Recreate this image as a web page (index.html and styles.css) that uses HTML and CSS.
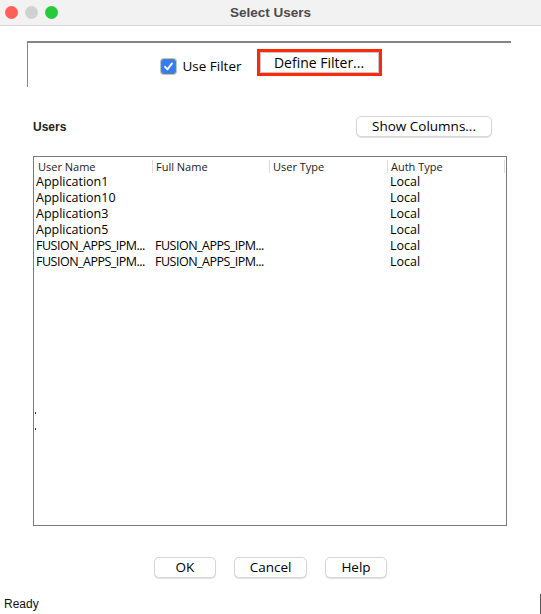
FILE: index.html
```html
<!DOCTYPE html>
<html>
<head>
<meta charset="utf-8">
<link rel="stylesheet" href="styles.css">
</head>
<body>
<div class="window">
  <div class="titlebar">
    <div class="lights">
      <span class="light red"></span>
      <span class="light gray"></span>
      <span class="light green"></span>
    </div>
    <div class="title">Select Users</div>
  </div>
  <div class="content">
    <div class="filter-panel">
      <label class="check">
        <span class="box"><svg width="11" height="11" viewBox="0 0 11 11"><path d="M2 5.8 L4.4 8.4 L9 2.4" fill="none" stroke="#fff" stroke-width="1.9" stroke-linecap="round" stroke-linejoin="round"/></svg></span>
        <span>Use Filter</span>
      </label>
      <div class="highlight"><button class="btn define">Define Filter...</button></div>
    </div>
    <div class="users-row">
      <span class="users-label">Users</span>
      <button class="btn rounded showcols">Show Columns...</button>
    </div>
    <div class="table">
      <div class="row head">
        <div class="c c1">User Name</div>
        <div class="c c2">Full Name</div>
        <div class="c c3">User Type</div>
        <div class="c c4">Auth Type</div>
      </div>
      <div class="row"><div class="c c1">Application1</div><div class="c c2"></div><div class="c c3"></div><div class="c c4">Local</div></div>
      <div class="row"><div class="c c1">Application10</div><div class="c c2"></div><div class="c c3"></div><div class="c c4">Local</div></div>
      <div class="row"><div class="c c1">Application3</div><div class="c c2"></div><div class="c c3"></div><div class="c c4">Local</div></div>
      <div class="row"><div class="c c1">Application5</div><div class="c c2"></div><div class="c c3"></div><div class="c c4">Local</div></div>
      <div class="row"><div class="c c1 caps">FUSION_APPS_IPM...</div><div class="c c2 caps">FUSION_APPS_IPM...</div><div class="c c3"></div><div class="c c4">Local</div></div>
      <div class="row"><div class="c c1 caps">FUSION_APPS_IPM...</div><div class="c c2 caps">FUSION_APPS_IPM...</div><div class="c c3"></div><div class="c c4">Local</div></div>
      <span class="dot d1"></span>
      <span class="dot d2"></span>
    </div>
    <div class="buttons">
      <button class="btn rounded ok">OK</button>
      <button class="btn rounded cancel">Cancel</button>
      <button class="btn rounded help">Help</button>
    </div>
  </div>
  <div class="status">Ready</div>
</div>
</body>
</html>
```
FILE: styles.css
```css
html, body {
  margin: 0;
  padding: 0;
  background: #ffffff;
}
body {
  width: 541px;
  height: 614px;
  overflow: hidden;
  font-family: "Open Sans", "DejaVu Sans", sans-serif;
  font-size: 12px;
  color: #000;
}
.window {
  width: 541px;
  height: 614px;
  display: flex;
  flex-direction: column;
}
.titlebar {
  height: 25px;
  flex: none;
  background: #f2f2f2;
  border-bottom: 1px solid #d8d8d8;
  position: relative;
  display: flex;
  align-items: center;
  justify-content: center;
}
.lights {
  position: absolute;
  left: 5px;
  top: 6px;
  display: flex;
  gap: 7px;
}
.light {
  width: 13px;
  height: 13px;
  border-radius: 50%;
  display: block;
}
.light.red { background: #fe5f57; }
.light.gray { background: #d1d1d1; }
.light.green { background: #27c93f; }
.title {
  font-family: "Liberation Sans", "Open Sans", sans-serif;
  font-weight: bold;
  font-size: 13.5px;
  color: #4b4b4b;
}
.content {
  flex: 1;
  display: flex;
  flex-direction: column;
}
.filter-panel {
  margin: 15px 30px 0 27px;
  height: 46px;
  border-top: 2px solid #858585;
  border-left: 1px solid #858585;
  display: flex;
  justify-content: center;
  align-items: flex-start;
  padding-top: 6px;
  padding-left: 4px;
  box-sizing: border-box;
}
.check {
  display: flex;
  align-items: center;
  gap: 6px;
  font-size: 13.5px;
  margin-top: 9px;
  height: 16px;
}
.box {
  width: 13px;
  height: 13px;
  border-radius: 3px;
  background: #2f7ef6;
  border: 1px solid #6d7c95;
  box-shadow: 0 0 0 1px #b7c3d6;
  display: flex;
  align-items: center;
  justify-content: center;
}
.highlight {
  margin-left: 15px;
  border: 3px solid #ff2a0a;
  display: flex;
}
.btn {
  font-family: "Open Sans", "DejaVu Sans", sans-serif;
  font-size: 13.5px;
  color: #000;
  background: #fff;
  padding: 0;
}
.define {
  width: 119px;
  height: 21px;
  border: 1px solid #c8c8c8;
  line-height: 17px;
  font-size: 14px;
}
.users-row {
  display: flex;
  justify-content: space-between;
  align-items: center;
  margin: 29px 49px 0 33px;
}
.users-label {
  font-family: "Liberation Sans", sans-serif;
  font-weight: bold;
  font-size: 12px;
  color: #222;
}
.rounded {
  border: 1px solid #d6d6d6;
  border-radius: 5px;
  box-shadow: 0 1px 1px rgba(0,0,0,0.12);
  height: 21px;
  line-height: 17px;
}
.showcols { width: 136px; }
.table {
  margin: 19px 0 0 33px;
  width: 472px;
  height: 368px;
  border: 1px solid #7a7a7a;
  position: relative;
  flex: none;
}
.row {
  display: flex;
  height: 16px;
  line-height: 16px;
  font-size: 12.5px;
}
.row.head {
  height: 17px;
  align-items: center;
  font-size: 11px;
}
.c {
  white-space: nowrap;
  padding-left: 2px;
  box-sizing: border-box;
}
.caps { letter-spacing: -0.5px; }
.c1 { width: 119px; }
.c2 { width: 117px; }
.c3 { width: 118px; }
.c4 { width: 117px; }
.head .c {
  padding-left: 3px;
  color: #222;
  border-right: 1px solid #dcdcdc;
  height: 13px;
  line-height: 13px;
  margin-top: 1px;
}
.head .c1 { padding-left: 4px; }
.dot {
  position: absolute;
  left: 1px;
  width: 1px;
  height: 2px;
  background: #333;
}
.d1 { top: 255px; }
.d2 { top: 271px; }
.buttons {
  display: flex;
  justify-content: center;
  gap: 18px;
  margin-top: 31px;
}
.ok { width: 62px; }
.cancel { width: 73px; }
.help { width: 62px; }
.status {
  height: 20px;
  flex: none;
  line-height: 20px;
  padding-left: 4px;
  font-family: "Liberation Sans", sans-serif;
  font-size: 12px;
  color: #111;
  border-right: 1px solid #555;
}
```
